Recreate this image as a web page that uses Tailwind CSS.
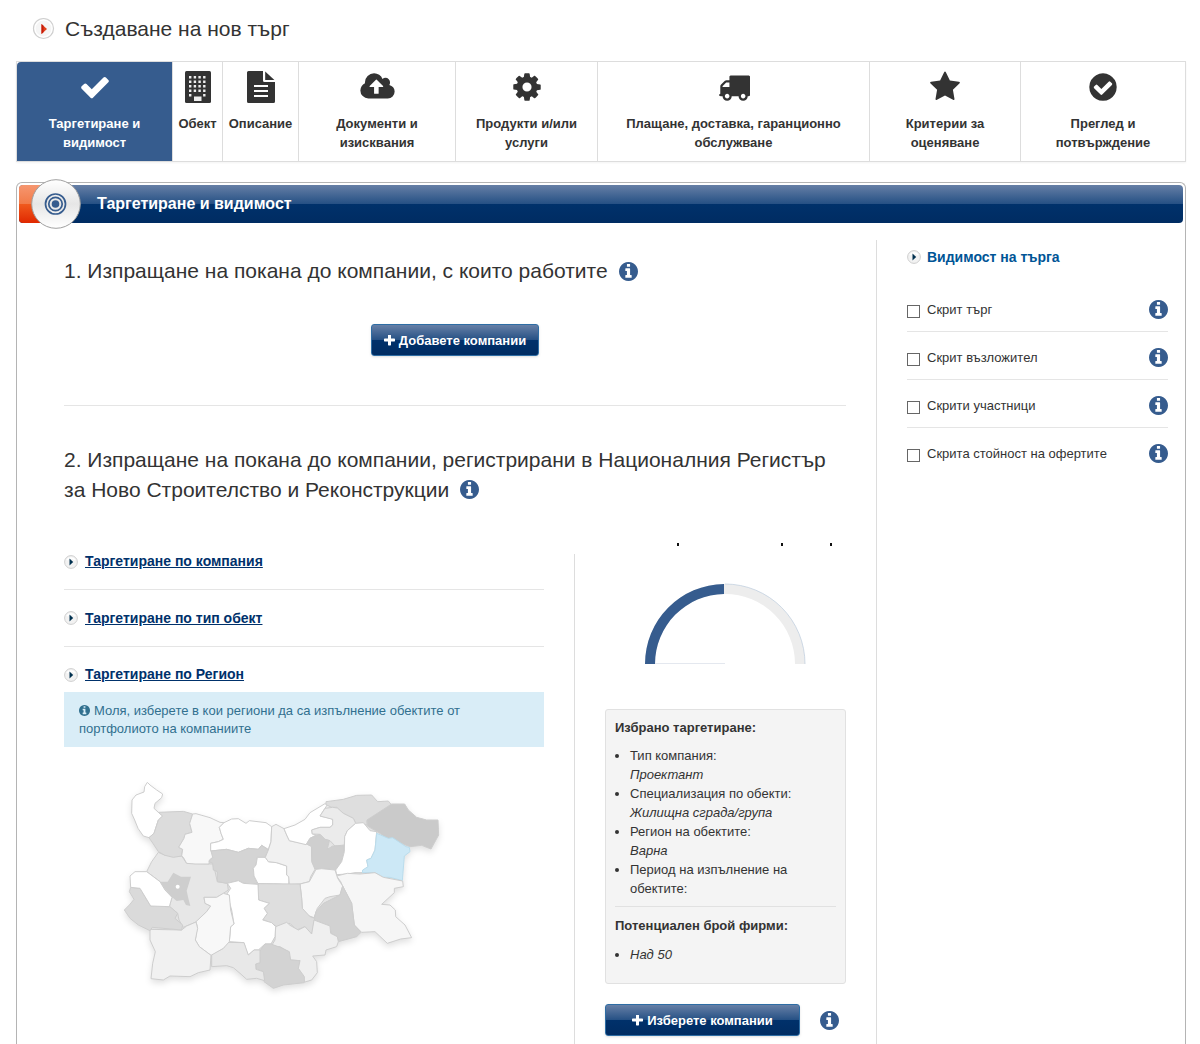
<!DOCTYPE html>
<html lang="bg">
<head>
<meta charset="utf-8">
<meta name="viewport" content="width=device-width, initial-scale=1">
<title>Създаване на нов търг</title>
<script src="https://cdn.jsdelivr.net/npm/@tailwindcss/browser@4"></script>
</head>
<body class="bg-white font-['Liberation_Sans',Arial,sans-serif] text-[13px] leading-[19px] text-[#333]">

<!-- Shared icon symbols -->
<svg class="hidden" aria-hidden="true">
  <symbol id="i-info" viewBox="128 128 1536 1536"><path d="M1152 1376v-160q0-14-9-23t-23-9h-96v-512q0-14-9-23t-23-9h-320q-14 0-23 9t-9 23v160q0 14 9 23t23 9h96v320h-96q-14 0-23 9t-9 23v160q0 14 9 23t23 9h448q14 0 23-9t9-23zm-128-896v-160q0-14-9-23t-23-9h-192q-14 0-23 9t-9 23v160q0 14 9 23t23 9h192q14 0 23-9t9-23zm640 416q0 209-103 385.5t-279.5 279.5-385.5 103-385.5-103-279.5-279.5-103-385.5 103-385.5 279.5-279.5 385.5-103 385.5 103 279.5 279.5 103 385.5z"/></symbol>
  <symbol id="i-plus" viewBox="192 192 1408 1408"><path d="M1600 736v192q0 40-28 68t-68 28h-416v416q0 40-28 68t-68 28h-192q-40 0-68-28t-28-68v-416h-416q-40 0-68-28t-28-68v-192q0-40 28-68t68-28h416v-416q0-40 28-68t68-28h192q40 0 68 28t28 68v416h416q40 0 68 28t28 68z"/></symbol>
  <symbol id="i-bullet" viewBox="0 0 14 14"><circle cx="7" cy="7" r="6.4" fill="#f2f2f2" stroke="#cfcfcf"/><path d="M3 5a5 5 0 0 1 8 0" fill="none" stroke="#fff" stroke-width="1.5"/><path d="M5.500 3.600 9.200 7 5.500 10.400z" fill="#00304f"/></symbol>
</svg>

<div class="flex min-h-screen flex-col pl-4 pr-3.5">
  <header class="flex h-[61px] items-center gap-2.5 pb-1 pl-4">
    <svg class="size-[23px]" viewBox="0 0 23 23" aria-hidden="true"><circle cx="11.5" cy="11.5" r="10" fill="#f5f5f5" stroke="#cfcfcf" stroke-width="1.2"/><circle cx="11.5" cy="11.5" r="8.5" fill="none" stroke="#fff" stroke-width="1.2"/><path d="M9.500 7l5.500 5-5.500 5z" fill="#e2401a"/><path d="M9.500 7l2 1.800v6.400l-2 1.800z" fill="#c41a0a"/></svg>
    <h1 class="text-[21px] leading-7">Създаване на нов търг</h1>
  </header>

  <nav class="grid grid-cols-[155fr_50fr_76fr_157fr_142fr_272fr_151fr_165fr] border border-[#ddd] text-center font-bold shadow-xs">
    <a href="#" class="flex h-[99px] flex-col items-center gap-[11px] rounded-tl-sm bg-[#365c8e] px-5 pt-[9px] text-white">
      <svg class="size-8 shrink-0" viewBox="0 0 1792 1792" fill="currentColor"><path d="M1671 566q0 40-28 68l-724 724-136 136q-28 28-68 28t-68-28l-136-136-362-362q-28-28-28-68t28-68l136-136q28-28 68-28t68 28l294 295 656-657q28-28 68-28t68 28l136 136q28 28 28 68z"/></svg>
      <span>Таргетиране и видимост</span>
    </a>
    <a href="#" class="flex flex-col items-center gap-[11px] border-l border-[#ddd] pt-[9px]">
      <svg class="size-8 shrink-0" viewBox="0 0 32 32"><rect x="3" y="0" width="26" height="32" rx="1.5" fill="#333"/><g stroke="#eee" stroke-width="2.400" stroke-dasharray="2.400 2.300"><path d="M7 6.300H24"/><path d="M7 10.800H24"/><path d="M7 15.300H24"/><path d="M7 19.800H24"/></g><path d="M7 23.100h2.400v2.400H7zM21.100 23.100h2.400v2.400h-2.400zM12 25.500h7.500v4.500h-7.500z" fill="#eee"/></svg>
      <span>Обект</span>
    </a>
    <a href="#" class="flex flex-col items-center gap-[11px] border-l border-[#ddd] pt-[9px]">
      <svg class="size-8 shrink-0" viewBox="0 0 32 32"><path d="M3.5 0H18v9.500q0 1.500 1.500 1.500H30v19.500q0 1.500-1.500 1.500h-25Q2 32 2 30.500v-29Q2 0 3.500 0z" fill="#333"/><path d="M20.200 .4 29.400 9H20.200z" fill="#333"/><path d="M9 15h14M9 20h14M9 25h14" stroke="#fff" stroke-width="2"/></svg>
      <span>Описание</span>
    </a>
    <a href="#" class="flex flex-col items-center gap-[11px] border-l border-[#ddd] px-5 pt-[9px]">
      <svg class="h-8 w-[35px] shrink-0" viewBox="-64 0 1920 1792" fill="#333"><path d="M1216 864q0-14-9-23l-352-352q-9-9-23-9t-23 9l-351 351q-10 12-10 24 0 14 9 23t23 9h224v352q0 13 9.5 22.500t22.500 9.500h192q13 0 22.500-9.500t9.500-22.500v-352h224q13 0 22.500-9.500t9.500-22.500zm640 288q0 159-112.500 271.500t-271.500 112.500h-1088q-185 0-316.500-131.500t-131.500-316.500q0-130 70-240t188-165q-2-30-2-43 0-212 150-362t362-150q156 0 285.500 87t188.500 231q71-62 166-62 106 0 181 75t75 181q0 76-41 138 130 31 213.500 135.500t83.500 238.500z"/></svg>
      <span>Документи и изисквания</span>
    </a>
    <a href="#" class="flex flex-col items-center gap-[11px] border-l border-[#ddd] px-4 pt-[9px]">
      <svg class="size-8 shrink-0" viewBox="0 0 1792 1792" fill="#333"><path d="M1152 896q0-106-75-181t-181-75-181 75-75 181 75 181 181 75 181-75 75-181zm512-109v222q0 12-8 23t-20 13l-185 28q-19 54-39 91 35 50 107 138 10 12 10 25t-9 23q-27 37-99 108t-94 71q-12 0-26-9l-138-108q-44 23-91 38-16 136-29 186-7 28-36 28h-222q-14 0-24.500-8.500t-11.500-21.500l-28-184q-49-16-90-37l-141 107q-10 9-25 9-14 0-25-11-126-114-165-168-7-10-7-23 0-12 8-23 15-21 51-66.500t54-70.500q-27-50-41-99l-183-27q-13-2-21-12.500t-8-23.500v-222q0-12 8-23t19-13l186-28q14-46 39-92-40-57-107-138-10-12-10-24 0-10 9-23 26-36 98.500-107.500t94.500-71.500q13 0 26 10l138 107q44-23 91-38 16-136 29-186 7-28 36-28h222q14 0 24.500 8.500t11.500 21.500l28 184q49 16 90 37l142-107q9-9 24-9 13 0 25 10 129 119 165 170 7 8 7 22 0 12-8 23-15 21-51 66.500t-54 70.500q26 50 41 98l183 28q13 2 21 12.500t8 23.500z"/></svg>
      <span>Продукти и/или услуги</span>
    </a>
    <a href="#" class="flex flex-col items-center gap-[11px] border-l border-[#ddd] px-5 pt-[9px]">
      <svg class="size-8 shrink-0" viewBox="0 0 1792 1792" fill="#333"><path d="M640 1408q0-52-38-90t-90-38-90 38-38 90 38 90 90 38 90-38 38-90zm-384-512h384v-256h-158q-13 0-22 9l-195 195q-9 9-9 22v30zm1280 512q0-52-38-90t-90-38-90 38-38 90 38 90 90 38 90-38 38-90zm256-1088v1024q0 15-4 26.500t-13.500 18.500-16.500 11.500-23.500 6-22.500 2-25.500 0-22.500-.5q0 106-75 181t-181 75-181-75-75-181h-384q0 106-75 181t-181 75-181-75-75-181h-64q-3 0-22.500.5t-25.500 0-22.500-2-23.500-6-16.500-11.500-13.500-18.500-4-26.500q0-26 19-45t45-19v-320q0-8-.5-35t0-38 2.500-34.500 6.500-37 14-30.500 22.500-30l198-198q19-19 50.500-32t58.500-13h160v-192q0-26 19-45t45-19h1024q26 0 45 19t19 45z"/></svg>
      <span>Плащане, доставка, гаранционно обслужване</span>
    </a>
    <a href="#" class="flex flex-col items-center gap-[11px] border-l border-[#ddd] px-7 pt-[9px]">
      <svg class="size-8 shrink-0" viewBox="0 0 1792 1792" fill="#333"><path d="M1728 647q0 22-26 48l-363 354 86 500q1 7 1 20 0 21-10.500 35.500t-30.500 14.500q-19 0-40-12l-449-236-449 236q-22 12-40 12-21 0-31.500-14.500t-10.500-35.500q0-6 2-20l86-500-364-354q-25-27-25-48 0-37 56-46l502-73 225-455q19-41 49-41t49 41l225 455 502 73q56 9 56 46z"/></svg>
      <span>Критерии за оценяване</span>
    </a>
    <a href="#" class="flex flex-col items-center gap-[11px] border-l border-[#ddd] px-7 pt-[9px]">
      <svg class="size-8 shrink-0" viewBox="0 0 1792 1792" fill="#333"><path d="M1412 734q0-28-18-46l-91-90q-19-19-45-19t-45 19l-408 407-226-226q-19-19-45-19t-45 19l-91 90q-18 18-18 46 0 27 18 45l362 362q19 19 45 19 27 0 46-19l543-543q18-18 18-45zm252 162q0 209-103 385.500t-279.500 279.500-385.500 103-385.500-103-279.500-279.500-103-385.500 103-385.500 279.500-279.500 385.500-103 385.500 103 279.500 279.500 103 385.500z"/></svg>
      <span>Преглед и потвърждение</span>
    </a>
  </nav>

  <section class="mt-5 flex flex-1 flex-col rounded-t-md border border-b-0 border-[#b4b4b4]">
    <div class="relative m-0.5 mb-0 flex h-[38px] items-center rounded bg-[linear-gradient(#667fa6,#255084_50%,#00316b_50%,#002c62)] pl-[78px]">
      <div class="absolute left-0 top-0 h-full w-9 rounded-l bg-[linear-gradient(#f69770,#f27a48_50%,#f05a1e_50%,#e02800)]"></div>
      <svg class="absolute -top-1.5 left-3 size-[50px]" viewBox="0 0 50 50" aria-hidden="true">
        <defs><linearGradient id="disc" x1="0" y1="0" x2="0" y2="1"><stop offset="0" stop-color="#fff"/><stop offset=".5" stop-color="#e6e6e6"/><stop offset="1" stop-color="#fff"/></linearGradient></defs>
        <circle cx="25" cy="25" r="24.300" fill="url(#disc)" stroke="#a0a0a0"/>
        <g fill="none" stroke="#365c8e" stroke-width="1.700"><circle cx="24.500" cy="25" r="10"/><circle cx="24.500" cy="25" r="6.700"/></g><circle cx="24.500" cy="25" r="3.800" fill="#365c8e"/>
      </svg>
      <h2 class="text-base font-bold text-white">Таргетиране и видимост</h2>
    </div>

    <div class="mt-[17px] flex flex-1">
      <main class="flex flex-1 flex-col pl-[47px] pr-[30px] pt-4">
        <h3 class="flex items-center gap-[11px] text-[21px] leading-[30px]">1. Изпращане на покана до компании, с които работите
          <svg class="size-[19px] fill-[#365c8e]"><use href="#i-info"/></svg></h3>
        <button type="button" class="mt-[38px] flex h-8 items-center gap-1 self-center rounded-[3px] border border-[#2e6da4] bg-[linear-gradient(#667fa6,#255084_50%,#00316b_50%,#002c62)] px-3 font-bold text-white shadow-sm"><svg class="size-[11px] fill-white"><use href="#i-plus"/></svg>Добавете компании</button>
        <hr class="mt-[49px] border-[#e5e5e5]">
        <h3 class="mt-[39px] text-[21px] leading-[30px]">2. Изпращане на покана до компании, регистрирани в Националния Регистър за Ново Строителство и Реконструкции
          <svg class="ml-[5px] inline-block size-[19px] fill-[#365c8e] align-[-2px]"><use href="#i-info"/></svg></h3>

        <div class="mt-[35px] flex flex-1">
          <div class="flex-1 pr-[30px] pt-3">
            <div class="flex items-center gap-[7px] border-b border-[#e5e5e5] pb-[18px] text-sm leading-[19px]"><svg class="size-3.5"><use href="#i-bullet"/></svg><a href="#" class="font-bold text-[#00316b] underline">Таргетиране по компания</a></div>
            <div class="flex items-center gap-[7px] border-b border-[#e5e5e5] py-[18px] text-sm leading-5"><svg class="size-3.5"><use href="#i-bullet"/></svg><a href="#" class="font-bold text-[#00316b] underline">Таргетиране по тип обект</a></div>
            <div class="flex items-center gap-[7px] pb-2 pt-[18px] text-sm leading-[19px]"><svg class="size-3.5"><use href="#i-bullet"/></svg><a href="#" class="font-bold text-[#00316b] underline">Таргетиране по Регион</a></div>
            <p class="bg-[#d9edf7] pb-[9px] pl-[15px] pr-10 pt-2.5 leading-[18px] text-[#31708f]"><svg class="mr-1 inline-block size-[11px] fill-[#31708f] align-[-1px]"><use href="#i-info"/></svg>Моля, изберете в кои региони да са изпълнение обектите от портфолиото на компаниите</p>

            <!-- Bulgaria, one path per province -->
            <svg class="ml-[46px] mt-[23px] w-[340px] drop-shadow-md" viewBox="0 0 1020 690" stroke="#cdcdcd" stroke-width="3" stroke-linejoin="round" role="img" aria-label="Карта на регионите">
              <path fill="#e7e7e7" d="M145 247 165 256 215 258 230 280 310 282 322 335 352 340 355 360 340 370 320 382 282 382 285 400 302 408 290 425 258 456 220 472 207 450 203 430 178 410 186 382 165 360 150 335 110 305 125 275Z"/>
              <path fill="#fff" d="M112 37 120 45 140 60 158 72 155 83 135 100 132 115 145 127 158 138 145 150 132 190 117 203 100 198 84 175 74 150 65 130 66 90 78 75 102 66 104 50Z"/>
              <path fill="#dcdcdc" d="M145 127 220 124 248 132 239 160 246 187 225 193 222 205 206 232 218 238 215 258 190 262 165 256 145 245 130 222 117 203 132 190 145 150 158 138Z"/>
              <path fill="#f8f8f8" d="M248 132 258 131 300 143 330 157 342 158 328 172 333 190 340 208 325 215 302 220 303 240 312 242 308 262 298 270 297 282 255 282 230 280 220 262 215 258 218 238 206 232 222 205 225 193 246 187 239 160Z"/>
              <path fill="#fff" d="M328 172 342 158 365 147 385 146 408 160 418 152 468 158 485 170 483 215 475 238 455 226 445 238 415 235 385 247 350 238 302 243 302 220 325 215 340 208 333 190Z"/>
              <path fill="#d4d4d4" d="M303 243 350 238 385 247 415 235 445 238 455 226 475 240 466 262 442 262 438 285 430 295 432 318 444 343 400 340 385 332 352 340 322 335 322 305 310 300 308 280 297 275 308 262Z"/>
              <path fill="#fff" d="M442 262 466 262 475 275 500 278 530 288 530 315 538 320 536 345 500 342 444 341 432 318 430 295 438 285Z"/>
              <path fill="#f1f1f1" d="M485 170 498 163 522 176 530 195 538 212 600 225 605 230 605 258 612 275 615 298 602 320 598 335 570 342 538 344 536 320 530 315 530 288 500 278 475 275 466 262 475 240 483 215Z"/>
              <path fill="#fff" d="M522 176 555 165 585 148 600 128 645 101 652 104 630 138 665 146 670 155 668 165 660 172 630 172 605 180 607 192 618 195 600 205 588 224 538 212 530 195Z"/>
              <path fill="#dedede" d="M648 95 700 88 740 76 785 75 803 95 835 93 845 105 771 152 772 165 737 160 730 145 700 130 680 112 665 112 648 104Z"/>
              <path fill="#ebebeb" d="M668 112 682 114 700 130 730 145 737 160 712 182 704 200 703 225 675 228 660 212 645 208 630 193 607 192 605 180 630 172 660 172 668 165 668 148 630 138 645 115Z"/>
              <path fill="#cfcfcf" d="M630 193 645 208 658 212 652 238 668 228 702 227 703 245 695 275 675 300 635 296 615 298 605 275 605 230 590 222 600 205Z"/>
              <path fill="#fff" d="M737 160 760 158 780 182 800 185 795 240 783 265 770 270 774 290 756 308 735 308 712 312 680 314 677 300 695 275 703 245 704 200 712 182Z"/>
              <path fill="#cacaca" d="M771 150 845 102 884 102 895 120 920 142 950 150 984 150 986 195 963 237 935 226 900 230 860 215 825 205 810 190 772 168Z"/>
              <path fill="#cce8f6" stroke="#b9dcec" d="M800 190 812 195 835 205 848 203 888 230 898 232 900 245 883 258 877 332 840 322 820 322 795 308 757 308 758 300 774 290 770 270 783 265 795 240Z"/>
              <path fill="#f6f6f6" d="M680 318 712 310 750 312 795 308 820 322 878 333 880 350 853 355 853 368 815 403 840 405 856 420 857 440 885 465 905 503 872 507 832 520 795 485 755 487 733 465 728 425 725 400 698 348 692 335Z"/>
              <path fill="#f7f7f7" d="M570 342 598 335 618 298 635 296 675 300 683 325 698 348 690 375 660 380 645 385 622 415 612 443 590 435 577 415 575 385Z"/>
              <path fill="#d2d2d2" d="M698 348 725 400 728 425 733 465 753 487 740 500 685 515 680 500 663 490 660 468 612 450 618 425 640 400 690 375Z"/>
              <path fill="#dedede" d="M444 341 570 342 575 385 577 415 600 440 614 445 608 485 600 492 585 470 560 480 540 460 500 470 485 460 458 448 472 430 462 415 478 400 446 390Z"/>
              <path fill="#efefef" d="M497 470 530 457 540 466 565 480 585 470 605 492 612 450 660 468 662 490 682 500 685 515 680 530 648 540 645 555 608 558 620 575 622 608 605 630 585 636 565 605 562 585 570 572 540 570 535 545 510 530 483 530 495 510Z"/>
              <path fill="#fff" d="M352 340 385 332 400 340 444 343 446 390 478 400 462 415 472 430 458 450 485 458 497 470 495 500 483 522 465 522 445 540 432 540 415 555 408 540 402 518 358 515 362 470 372 462 365 420 355 385 352 370 362 355Z"/>
              <path fill="#d3d3d3" d="M483 522 510 532 538 545 542 570 570 572 565 595 583 620 583 638 520 645 490 655 462 635 460 605 438 598 437 582 450 578 448 545 465 522Z"/>
              <path fill="#e8e8e8" d="M305 552 340 535 350 517 402 518 415 555 432 540 450 540 450 578 437 582 438 598 460 605 464 632 440 625 410 628 390 610 370 593 350 587 305 590Z"/>
              <path fill="#f8f8f8" d="M282 382 320 382 340 370 358 375 362 420 372 462 362 470 358 515 340 535 303 556 268 530 256 510 262 470 258 455 290 425 302 408 285 400Z"/>
              <path fill="#f1f1f1" d="M120 478 215 480 230 468 258 456 263 475 256 510 268 530 303 556 300 600 265 608 240 620 180 618 160 630 123 626 128 580 136 545 120 510Z"/>
              <path fill="#dadada" d="M62 352 90 355 122 408 180 410 203 430 195 445 218 465 215 480 127 472 120 482 85 465 60 445 43 420 58 405 72 388 58 365Z"/>
              <path fill="#fff" d="M60 318 75 305 110 305 150 335 165 360 186 382 178 410 122 408 90 355 62 352Z"/>
              <path fill="#cecece" stroke="none" d="M150 335 173 335 190 308 213 320 243 320 230 362 235 385 241 408 228 405 220 390 200 393 185 380 165 358Z"/>
              <circle cx="203" cy="350" r="6" fill="#fff" stroke="none"/>
            </svg>
          </div>

          <aside class="mt-3.5 w-[272px] border-l border-[#ddd] pl-[30px]">
            <svg class="-mt-3.5 h-[169px] w-full" viewBox="0 0 241 169" role="img" aria-label="Индикатор за таргетиране">
              <path d="M72 3h2v3h-2zM176 3h2v3h-2zM225 3h2v3h-2z" fill="#111"/>
              <path d="M40 124a80 80 0 0 1 160 0h-10a70 70 0 0 0-140 0z" fill="#ededed"/>
              <path d="M120 44a80 80 0 0 1 80 80" fill="none" stroke="#bccbdd" stroke-width=".7"/>
              <path d="M40 124a80 80 0 0 1 79-80v10a70 70 0 0 0-69 70z" fill="#365c8e"/>
              <path d="M50 123.500h70" stroke="#e4e8ef"/>
            </svg>
            <div class="rounded-[3px] border border-[#e1e1e1] bg-[#f4f4f4] px-[9px] pb-[19px] pt-2">
              <h4 class="font-bold">Избрано таргетиране:</h4>
              <ul class="mt-[9px] list-disc border-b border-[#e1e1e1] pb-2 pl-[15px] leading-[19px]">
                <li>Тип компания:<br><i>Проектант</i></li>
                <li>Специализация по обекти:<br><i>Жилищна сграда/група</i></li>
                <li>Регион на обектите:<br><i>Варна</i></li>
                <li>Период на изпълнение на обектите:</li>
              </ul>
              <h4 class="mt-[9px] font-bold">Потенциален брой фирми:</h4>
              <ul class="mt-2.5 list-disc pl-[15px]"><li><i>Над 50</i></li></ul>
            </div>
            <div class="mt-5 flex items-center gap-5 pb-2">
              <button type="button" class="flex h-8 w-[195px] items-center justify-center gap-1 rounded-[3px] border border-[#2e6da4] bg-[linear-gradient(#667fa6,#255084_50%,#00316b_50%,#002c62)] font-bold text-white shadow-sm"><svg class="size-[11px] fill-white"><use href="#i-plus"/></svg>Изберете компании</button>
              <svg class="size-[19px] fill-[#365c8e]"><use href="#i-info"/></svg>
            </div>
          </aside>
        </div>
      </main>

      <aside class="w-[309px] border-l border-[#ddd] pl-[30px] pr-[17px] pt-[7px]">
        <h3 class="flex items-center gap-1.5 text-sm leading-5 font-bold text-[#005596]"><svg class="size-3.5"><use href="#i-bullet"/></svg>Видимост на търга</h3>
        <div class="mt-[17px] flex h-12 items-center border-b border-[#e5e5e5] pt-1"><input id="c1" type="checkbox" class="mr-[7px] mt-1 size-[13px] appearance-none border border-[#666] bg-white"><label for="c1" class="flex-1">Скрит търг</label><svg class="size-[19px] fill-[#365c8e]"><use href="#i-info"/></svg></div>
        <div class="flex h-12 items-center border-b border-[#e5e5e5] pt-1"><input id="c2" type="checkbox" class="mr-[7px] mt-1 size-[13px] appearance-none border border-[#666] bg-white"><label for="c2" class="flex-1">Скрит възложител</label><svg class="size-[19px] fill-[#365c8e]"><use href="#i-info"/></svg></div>
        <div class="flex h-12 items-center border-b border-[#e5e5e5] pt-1"><input id="c3" type="checkbox" class="mr-[7px] mt-1 size-[13px] appearance-none border border-[#666] bg-white"><label for="c3" class="flex-1">Скрити участници</label><svg class="size-[19px] fill-[#365c8e]"><use href="#i-info"/></svg></div>
        <div class="flex h-12 items-center border-b border-transparent pt-1"><input id="c4" type="checkbox" class="mr-[7px] mt-1 size-[13px] appearance-none border border-[#666] bg-white"><label for="c4" class="flex-1">Скрита стойност на офертите</label><svg class="size-[19px] fill-[#365c8e]"><use href="#i-info"/></svg></div>
      </aside>
    </div>
  </section>
</div>
</body>
</html>
